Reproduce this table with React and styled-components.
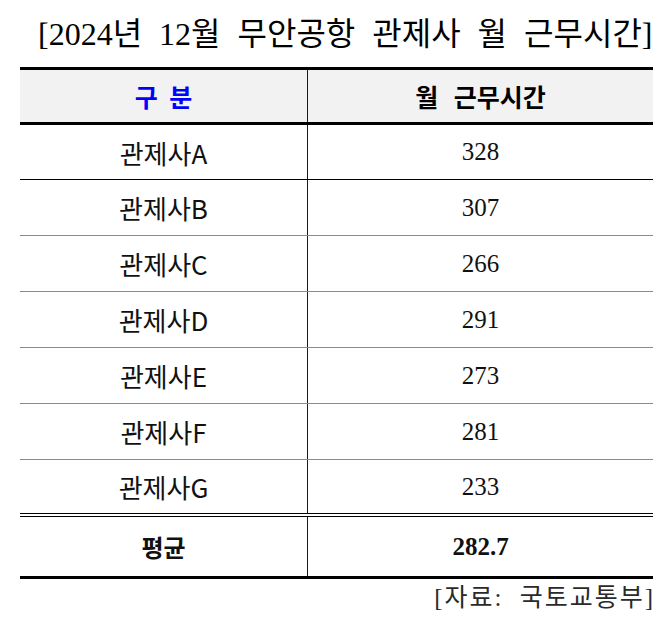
import React from "react";
import styled, { createGlobalStyle } from "styled-components";

const GlobalStyle = createGlobalStyle`
  html, body { margin: 0; padding: 0; background: #fff; }
  body { font-family: "Noto Sans CJK KR", "Noto Sans", sans-serif; color: #000; }
`;

const Page = styled.div`
  width: 670px;
  height: 624px;
  display: flex;
  flex-direction: column;
  padding-top: 17px;
  box-sizing: border-box;
`;

const Title = styled.h1`
  margin: 0 0 16px 38px;
  font-family: "Liberation Serif", "Noto Sans CJK KR", serif;
  font-weight: 400;
  font-size: 32px;
  line-height: 34px;
  word-spacing: 9px;
  white-space: nowrap;
  color: #000;
`;

const Table = styled.div`
  margin-left: 20px;
  width: 633px;
  display: flex;
  flex-direction: column;
`;

const Row = styled.div`
  display: flex;
  height: ${(p) => p.$h}px;
  background: ${(p) => p.$bg || "transparent"};
  border-top: ${(p) => p.$top || "none"};
  border-bottom: ${(p) => p.$bottom || "none"};
`;

const Cell = styled.div`
  display: flex;
  align-items: center;
  justify-content: center;
  box-sizing: border-box;
  width: ${(p) => (p.$first ? "288px" : "345px")};
  border-right: ${(p) => (p.$first ? "1px solid #1a1a1a" : "none")};
  white-space: nowrap;
`;

const HeadText = styled.span`
  font-family: "Noto Sans CJK KR", sans-serif;
  font-weight: 700;
  font-size: 25px;
  word-spacing: ${(p) => p.$ws || 3}px;
  color: ${(p) => p.$color || "#000"};
`;

const Label = styled.span`
  font-family: "Noto Sans CJK KR", sans-serif;
  font-weight: ${(p) => (p.$bold ? 700 : 400)};
  font-size: ${(p) => (p.$bold ? 24 : 26)}px;
  color: #111;
`;

const Num = styled.span`
  font-family: "Liberation Serif", serif;
  font-weight: ${(p) => (p.$bold ? 700 : 400)};
  font-size: 25px;
  color: #111;
`;

const Source = styled.div`
  align-self: flex-end;
  margin: 3px 15px 0 0;
  font-family: "Liberation Serif", "Noto Sans CJK KR", serif;
  font-size: 25px;
  line-height: 32px;
  letter-spacing: 2px;
  word-spacing: 8px;
  color: #2a2a2a;
`;

const rows = [
  ["관제사A", "328", 54, "1px solid #000"],
  ["관제사B", "307", 55, "1px solid #8a8a8a"],
  ["관제사C", "266", 55, "1px solid #8a8a8a"],
  ["관제사D", "291", 55, "1px solid #8a8a8a"],
  ["관제사E", "273", 55, "1px solid #8a8a8a"],
  ["관제사F", "281", 55, "1px solid #8a8a8a"],
  ["관제사G", "233", 53, "4px double #000"],
];

export default function App() {
  return (
    <>
      <GlobalStyle />
      <Page>
        <Title>[2024년 12월 무안공항 관제사 월 근무시간]</Title>
        <Table>
          <Row $h={52} $bg="#f2f2f2" $top="3px solid #000" $bottom="3px solid #000">
            <Cell $first>
              <HeadText $color="#0000ff" $ws={6}>구 분</HeadText>
            </Cell>
            <Cell>
              <HeadText $ws={10}>월 근무시간</HeadText>
            </Cell>
          </Row>
          {rows.map(([name, val, h, border]) => (
            <Row key={name} $h={h} $bottom={border}>
              <Cell $first>
                <Label>{name}</Label>
              </Cell>
              <Cell>
                <Num>{val}</Num>
              </Cell>
            </Row>
          ))}
          <Row $h={59} $bottom="3px solid #000">
            <Cell $first>
              <Label $bold>평균</Label>
            </Cell>
            <Cell>
              <Num $bold>282.7</Num>
            </Cell>
          </Row>
        </Table>
        <Source>[자료: 국토교통부]</Source>
      </Page>
    </>
  );
}
